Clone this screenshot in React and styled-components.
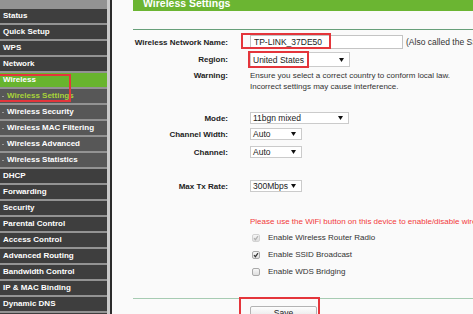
import styled, { createGlobalStyle } from "styled-components";

const Global = createGlobalStyle`
  html, body {
    margin: 0;
    padding: 0;
    overflow: hidden;
    background: #fafafa;
  }
  body {
    font-family: "Liberation Sans", Arial, sans-serif;
  }
`;

const Page = styled.div`
  display: flex;
  width: 473px;
  height: 314px;
  overflow: hidden;
`;

/* left menu */
const SideCol = styled.div`
  flex: none;
  border-right: 2px solid #2c2c2c;
`;

const Sidebar = styled.nav`
  width: 107px;
  height: 100%;
  box-sizing: content-box;
  background: #939393;
  border-right: 3px solid #cacaca;
  padding-top: 9px;
  display: flex;
  flex-direction: column;
  gap: 2px;
`;

const NavGroup = styled.div`
  position: relative;
  display: flex;
  flex-direction: column;
  gap: 2px;
`;

const NavItem = styled.div`
  position: relative;
  flex: none;
  height: 14px;
  line-height: 14px;
  padding-left: ${(p) => (p.$sub ? "7px" : "3px")};
  font-size: 8px;
  font-weight: bold;
  white-space: nowrap;
  overflow: hidden;
  color: ${(p) => (p.$current ? "#a8d43a" : "#ffffff")};
  background: ${(p) =>
    p.$active ? "#68b42e" : p.$sub ? "#575757" : "#3e3e3e"};

  ${(p) =>
    p.$sub &&
    `
    &::before {
      content: "";
      position: absolute;
      left: 2px;
      top: 7px;
      width: 2px;
      height: 1px;
      background: #9a9a9a;
    }
  `}
`;

/* annotation frame drawn over the screenshot */
const Mark = styled.span`
  position: absolute;
  left: ${(p) => p.$l}px;
  top: ${(p) => p.$t}px;
  width: ${(p) => p.$w}px;
  height: ${(p) => p.$h}px;
  box-sizing: border-box;
  border: 2px solid #e4353b;
  pointer-events: none;
`;

/* content */
const Content = styled.main`
  flex: 1;
  min-width: 0;
  padding-left: 21px;
  overflow: hidden;
  background: #fafafa;
`;

const Header = styled.div`
  margin-top: -15px;
  height: 26px;
  box-sizing: border-box;
  padding: 0 0 2px 10px;
  display: flex;
  align-items: flex-end;
  background: #6bb532;
  color: #ffffff;
  font-size: 10.5px;
  line-height: 12px;
  font-weight: bold;
  white-space: nowrap;
`;

const Rule = styled.div`
  margin-top: ${(p) => p.$mt}px;
  border-top: 1px solid ${(p) => p.$color};
`;

const Row = styled.div`
  display: grid;
  grid-template-columns: 95px 1fr;
  column-gap: 22px;
  align-items: center;
  height: ${(p) => p.$h}px;
  margin-top: ${(p) => p.$mt || 0}px;
`;

const Label = styled.div`
  text-align: right;
  font-size: 8px;
  font-weight: bold;
  color: #222;
  white-space: nowrap;
  align-self: ${(p) => (p.$top ? "start" : "center")};
  line-height: 11px;
`;

const Value = styled.div`
  display: flex;
  align-items: center;
  gap: ${(p) => p.$gap || 0}px;
  font-size: 8px;
  color: #333;
  white-space: nowrap;
  min-width: 0;
`;

const Notes = styled.div`
  font-size: 8px;
  line-height: 11px;
  color: #333;
  white-space: nowrap;
`;

const Alert = styled.div`
  font-size: 8px;
  line-height: 11px;
  color: #f23a3a;
  white-space: nowrap;
`;

const Anchor = styled.div`
  position: relative;
  flex: none;
`;

const TextInput = styled.input`
  display: block;
  width: 153px;
  height: 14px;
  box-sizing: border-box;
  margin: 0;
  padding: 0 3px;
  border: 1px solid #c4c4c4;
  background: #fff;
  font-family: "Liberation Sans", Arial, sans-serif;
  font-size: 8.5px;
  color: #222;
  outline: none;
`;

const Hint = styled.span`
  margin-left: 3px;
  font-size: 8.5px;
  color: #333;
`;

const SelectBox = styled.div`
  width: ${(p) => p.$w}px;
  height: ${(p) => p.$h}px;
  box-sizing: border-box;
  border: 1px solid #cbcbcb;
  background: #fff;
  padding: 0 5px 0 2px;
  display: flex;
  align-items: center;
  justify-content: space-between;
  font-size: 8.5px;
  color: #222;
`;

const Arrow = () => (
  <svg width="5" height="4" viewBox="0 0 5 4">
    <path d="M0 0h5L2.5 4z" fill="#111" />
  </svg>
);

const Select = ({ w, h = 12, children }) => (
  <SelectBox $w={w} $h={h}>
    <span>{children}</span>
    <Arrow />
  </SelectBox>
);

const CheckBox = styled.span`
  flex: none;
  width: 8px;
  height: 8px;
  box-sizing: border-box;
  margin-left: 2px;
  border: 1px solid ${(p) => (p.$disabled ? "#d2d2d2" : "#a9a9a9")};
  border-radius: 2px;
  background: linear-gradient(#f7f7f7, #dedede);
  display: flex;
  align-items: center;
  justify-content: center;
`;

const Check = ({ color }) => (
  <svg width="6" height="6" viewBox="0 0 6 6">
    <path d="M1 3.2l1.4 1.5L5 1.2" fill="none" stroke={color} strokeWidth="1.2" />
  </svg>
);

const Option = ({ checked, disabled, children }) => (
  <Row $h={17}>
    <span />
    <Value $gap={8}>
      <CheckBox $disabled={disabled}>
        {checked && <Check color={disabled ? "#b0b0b0" : "#333"} />}
      </CheckBox>
      {children}
    </Value>
  </Row>
);

const SaveButton = styled.button`
  display: block;
  width: 67px;
  height: 14px;
  margin: 0;
  padding: 0;
  border: 1px solid #b3b3b3;
  border-radius: 2px;
  background: linear-gradient(#fdfdfd, #e4e4e4);
  font-family: "Liberation Sans", Arial, sans-serif;
  font-size: 8.5px;
  line-height: 12px;
  color: #222;
`;

const menu = [
  { name: "Status" },
  { name: "Quick Setup" },
  { name: "WPS" },
  { name: "Network" },
];

const wireless = [
  { name: "Wireless Security" },
  { name: "Wireless MAC Filtering" },
  { name: "Wireless Advanced" },
  { name: "Wireless Statistics" },
];

const rest = [
  "DHCP",
  "Forwarding",
  "Security",
  "Parental Control",
  "Access Control",
  "Advanced Routing",
  "Bandwidth Control",
  "IP & MAC Binding",
  "Dynamic DNS",
  "System Tools",
];

export default function App() {
  return (
    <>
      <Global />
      <Page>
        <SideCol>
          <Sidebar>
            {menu.map((m) => (
              <NavItem key={m.name}>{m.name}</NavItem>
            ))}
            <NavGroup>
              <NavItem $active>Wireless</NavItem>
              <NavItem $sub $current>
                Wireless Settings
              </NavItem>
              <Mark $l={-2} $t={1} $w={73} $h={28} />
            </NavGroup>
            {wireless.map((m) => (
              <NavItem key={m.name} $sub>
                {m.name}
              </NavItem>
            ))}
            {rest.map((name) => (
              <NavItem key={name}>{name}</NavItem>
            ))}
          </Sidebar>
        </SideCol>

        <Content>
          <Header>Wireless Settings</Header>
          <Rule $mt={18} $color="#679f79" />

          <Row $h={16} $mt={4}>
            <Label>Wireless Network Name:</Label>
            <Value>
              <Anchor>
                <TextInput defaultValue="TP-LINK_37DE50" readOnly />
                <Mark $l={-9} $t={-2} $w={90} $h={16} />
              </Anchor>
              <Hint>(Also called the SSID)</Hint>
            </Value>
          </Row>

          <Row $h={17} $mt={1}>
            <Label>Region:</Label>
            <Value>
              <Anchor>
                <Select w={100} h={15}>
                  United States
                </Select>
                <Mark $l={-2} $t={-1} $w={61} $h={17} />
              </Anchor>
            </Value>
          </Row>

          <Row $h={22} $mt={2}>
            <Label $top>Warning:</Label>
            <Notes>
              Ensure you select a correct country to conform local law.
              <br />
              Incorrect settings may cause interference.
            </Notes>
          </Row>

          <Row $h={16} $mt={18}>
            <Label>Mode:</Label>
            <Value>
              <Select w={99}>11bgn mixed</Select>
            </Value>
          </Row>
          <Row $h={16}>
            <Label>Channel Width:</Label>
            <Value>
              <Select w={52}>Auto</Select>
            </Value>
          </Row>
          <Row $h={16} $mt={2}>
            <Label>Channel:</Label>
            <Value>
              <Select w={52}>Auto</Select>
            </Value>
          </Row>

          <Row $h={16} $mt={18}>
            <Label>Max Tx Rate:</Label>
            <Value>
              <Select w={52}>300Mbps</Select>
            </Value>
          </Row>

          <Row $h={11} $mt={22}>
            <span />
            <Alert>
              Please use the WiFi button on this device to enable/disable
              wireless radio.
            </Alert>
          </Row>

          <Row $h={0} $mt={2} />
          <Option checked disabled>
            Enable Wireless Router Radio
          </Option>
          <Option checked>Enable SSID Broadcast</Option>
          <Option>Enable WDS Bridging</Option>

          <Rule $mt={18} $color="#a6cbb2" />

          <Row $h={14} $mt={7}>
            <span />
            <Value>
              <Anchor>
                <SaveButton type="button">Save</SaveButton>
                <Mark $l={-11} $t={-9} $w={81} $h={30} />
              </Anchor>
            </Value>
          </Row>
        </Content>
      </Page>
    </>
  );
}
